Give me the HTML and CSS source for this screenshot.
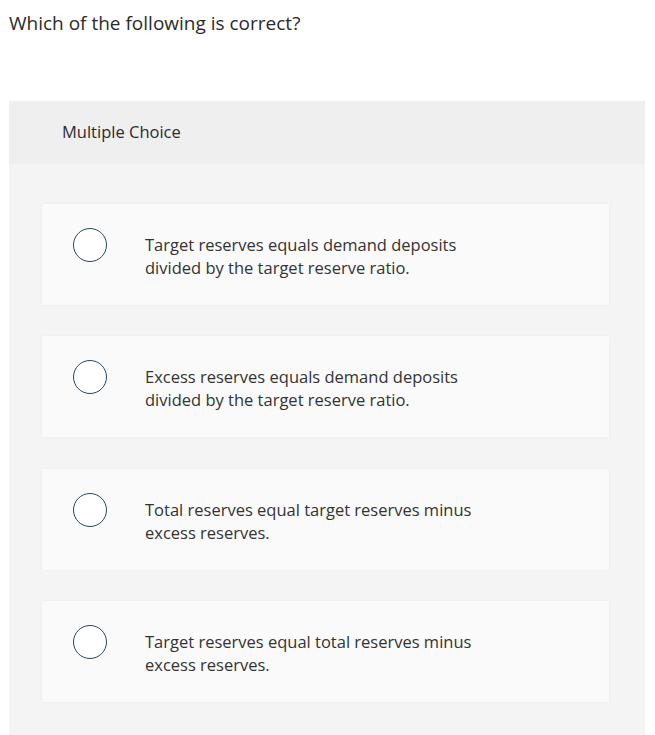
FILE: index.html
```html
<!DOCTYPE html>
<html>
<head>
<meta charset="utf-8">
<link rel="stylesheet" href="styles.css">
</head>
<body>
<h1 class="question">Which of the following is correct?</h1>
<section class="panel">
  <div class="panel-header">Multiple Choice</div>
  <div class="panel-body">
    <div class="choice">
      <span class="radio"></span>
      <p class="choice-text">Target reserves equals demand deposits<br>divided by the target reserve ratio.</p>
    </div>
    <div class="choice">
      <span class="radio"></span>
      <p class="choice-text">Excess reserves equals demand deposits<br>divided by the target reserve ratio.</p>
    </div>
    <div class="choice">
      <span class="radio"></span>
      <p class="choice-text">Total reserves equal target reserves minus<br>excess reserves.</p>
    </div>
    <div class="choice">
      <span class="radio"></span>
      <p class="choice-text">Target reserves equal total reserves minus<br>excess reserves.</p>
    </div>
  </div>
</section>
</body>
</html>
```

FILE: styles.css
```css
html, body {
  margin: 0;
  padding: 0;
  background: #ffffff;
}
body {
  padding: 0 10px 0 9px;
  font-family: "Open Sans", "Liberation Sans", sans-serif;
  color: #333333;
}
.question {
  margin: 0;
  padding-top: 10px;
  height: 101px;
  box-sizing: border-box;
  font-size: 19px;
  font-weight: 400;
  line-height: 26px;
  color: #2b2b2b;
}
.panel {
  background: #f4f4f4;
  min-height: 640px;
}
.panel-header {
  background: #efefef;
  height: 63px;
  box-sizing: border-box;
  padding: 20px 0 0 53px;
  font-size: 16.5px;
  line-height: 22px;
  color: #2b2b2b;
}
.panel-body {
  display: flex;
  flex-direction: column;
  gap: 31.4px;
  padding: 40px 36px 40px 33px;
}
.choice {
  display: flex;
  align-items: flex-start;
  height: 101px;
  box-sizing: border-box;
  background: #fafafa;
  box-shadow: 0 0 2px rgba(0, 0, 0, 0.06);
  padding: 24px 0 0 31px;
}
.radio {
  width: 32px;
  height: 32px;
  border: 1.5px solid #264760;
  border-radius: 50%;
  background: #ffffff;
  flex: none;
  margin-right: 38px;
}
.choice-text {
  margin: 5px 0 0;
  font-size: 16.5px;
  line-height: 23px;
  color: #333333;
}
```
